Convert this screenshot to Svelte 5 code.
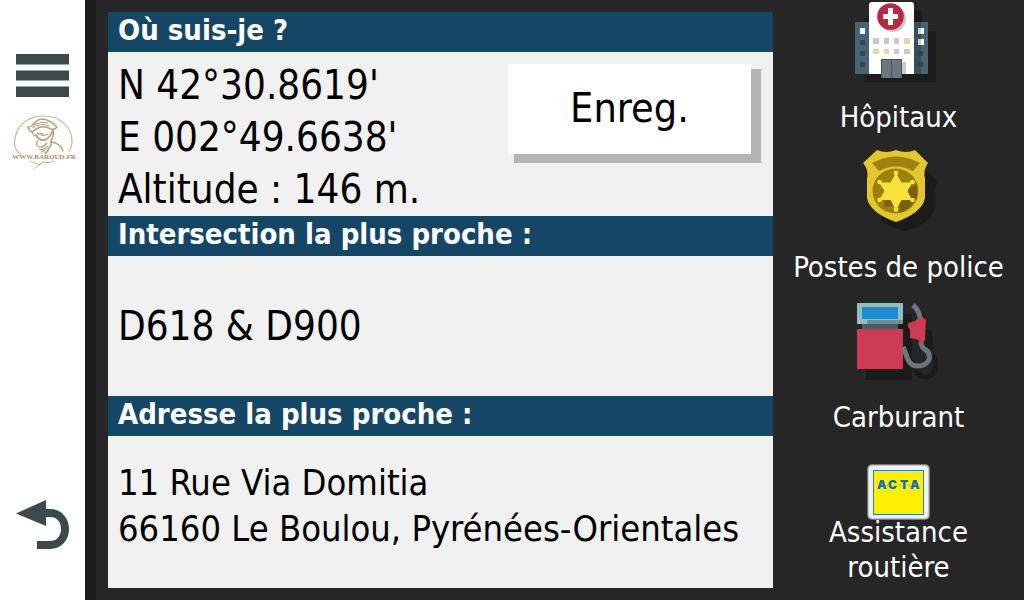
<script>
  const places = [
    { id: 'hospital', label: 'Hôpitaux' },
    { id: 'police', label: 'Postes de police' },
    { id: 'fuel', label: 'Carburant' },
    { id: 'assist', label: 'Assistance routière' }
  ];
  const position = ["N 42°30.8619'", "E 002°49.6638'", 'Altitude : 146 m.'];
  const address = ['11 Rue Via Domitia', '66160 Le Boulou, Pyrénées-Orientales'];
</script>

<div class="screen">
  <nav class="rail">
    <div class="top">
      <button class="plain" aria-label="Menu">
        <svg width="53" height="44" viewBox="0 0 53 44" shape-rendering="crispEdges">
          <path fill="#9ca4a4" d="M0 10h53v1H0zM0 16h53v1H0zM0 26h53v1H0zM0 32h53v1H0z" />
          <path fill="#3c4a4b" d="M0 0h53v10H0zM0 17h53v9H0zM0 33h53v10H0z" />
        </svg>
      </button>
      <svg class="brand" width="64" height="58" viewBox="0 0 64 58" role="img" aria-label="www.baroud.fr">
        <g fill="none" stroke="#b7a078" stroke-linecap="round" stroke-linejoin="round">
          <path stroke-width="1.200" d="M8 41C2 36 2 31 3 25C6 10 18 3 32 3C49 3 60 15 60 28Q60 34 57 38" stroke="#c9b797" />
          <path stroke-width="1.500" d="M16 14Q18 14 21 12Q25 6 31 6Q38 7 45 14Q43 17 39 16Q31 12 26 15Q22 17 20 19Q17 18 16 14Z" />
          <path stroke-width="1" d="M20 15Q29 9 37 13M22 12Q29 8 36 10M20 19Q20 22 23 23" />
          <path stroke-width="1.800" d="M24 22Q27 28 33 27Q38 25 41 17" />
          <path stroke-width="1.200" d="M25 20Q31 24 36 21M28 20L31 21" />
          <path stroke-width="1.600" d="M41 17Q42 23 39 28Q40 33 36 36Q37 38 33 40" />
          <path stroke-width="1.200" d="M26 28Q24 30 25 33Q30 36 35 30M27 36Q32 38 36 33M29 39L33 37" />
          <path stroke-width="1.400" d="M40 29Q48 30 51 38" />
          <path stroke-width="1" d="M18 48L28 52Q30 50 31 49M22 56Q27 52 31 49Q37 51 42 48" stroke="#c9b797" />
        </g>
        <text x="32" y="46" text-anchor="middle">WWW.BAROUD.FR</text>
      </svg>
    </div>
    <button class="plain" aria-label="Retour">
      <svg width="53" height="49" viewBox="0 0 53 49">
        <path fill="#3c4a4b" d="M0 13.500L30 0V26Z" />
        <path fill="none" stroke="#3c4a4b" stroke-width="8" d="M29 13H34C43 13 49 20 49 29C49 38 43 45 34 45H21" />
      </svg>
    </button>
  </nav>

  <main>
    <section class="where">
      <h1>Où suis-je ?</h1>
      <div class="body position">
        <div class="coords">
          {#each position as line}<p>{line}</p>{/each}
        </div>
        <button class="save">Enreg.</button>
      </div>
    </section>
    <section class="junction">
      <h2>Intersection la plus proche :</h2>
      <div class="body"><p class="road">D618 &amp; D900</p></div>
    </section>
    <section class="nearest">
      <h2>Adresse la plus proche :</h2>
      <div class="body">
        <address>
          {#each address as line}<p>{line}</p>{/each}
        </address>
      </div>
    </section>
  </main>

  <aside>
    {#each places as place}
      <a href={'#' + place.id}>
        <svg width="118" height="100" viewBox="0 0 118 100" aria-hidden="true">
          {#if place.id === 'hospital'}
            <path fill="#1b1b1b" d="M24 20L35 10H78Q82 10 82 14V31H96V82H24Z" />
            <path fill="#466473" d="M15 22H88V74H15Z" />
            <path fill="#34505d" d="M74 22H81V74H74Z" />
            <path fill="#fff" d="M29 5Q29 2 32 2H71Q74 2 74 5V74H29Z" />
            <path fill="#fff" d="M20 28h5v6h-5z" />
            <path fill="#cbd0d3" d="M78 28h6v6h-6zM78 39h6v6h-6z" />
            <path fill="#fff" d="M81 28h3v6h-3zM81 39h3v6h-3z" />
            <path fill="#2f4651" d="M20 40h5v5h-5zM20 51h5v5h-5zM20 62h5v5h-5zM78 51h5v5h-5zM78 62h5v5h-5z" />
            <circle cx="53" cy="19" r="13" fill="#c8c8c8" />
            <circle cx="50.500" cy="16.500" r="13.300" fill="#b82843" />
            <path fill="#fff" d="M48 8h5v6h5v5h-5v6h-5v-6h-5v-5h5z" />
            <path fill="#c9c9c9" d="M33 38h6v6h-6zM44 38h5v6h-5zM54 38h5v6h-5zM54 49h5v5h-5zM64 49h6v5h-6zM62 62h4v12h-4z" />
            <path fill="#e6d6a9" d="M64 38h6v6h-6zM33 49h6v5h-6zM44 49h5v5h-5z" />
            <path fill="#465158" d="M41 59h21v19H41z" />
            <path fill="#6a7680" d="M42 60h9v18h-9zM52 60h9v18h-9z" />
          {:else if place.id === 'police'}
            <path fill="#1b1b1b" d="M80 15L97 31Q93 40 95 54Q95 72 66 81Q54 80 40 70Z" />
            <path fill="#e3c72e" d="M37 0Q46 4 56 0Q66 4 75 0L88 13Q83 20 85 29V48Q82 63 56 72Q30 63 27 48V29Q29 20 23 13Z" />
            <path fill="#9c8110" d="M32 13Q56 0 80 13L73 21Q56 12 39 21Z" />
            <ellipse cx="55.500" cy="41" rx="23" ry="22.500" fill="#9c8110" />
            <path fill="#77630f" d="M44 51L77 34V47Q71 59 60 63L59 55L45 57Z" />
            <path fill="#fae23b" d="M56 23L61.500 32.500H72L67.500 41L72 50H61.500L56 60L50.500 50H39L44.500 41L39 32.500H50.500Z" />
            <g fill="#fae23b"><circle cx="56" cy="23" r="2.300" /><circle cx="72.500" cy="32" r="2.300" /><circle cx="72.500" cy="50" r="2.300" /><circle cx="56" cy="59.500" r="2.300" /><circle cx="39.500" cy="50" r="2.300" /><circle cx="39.500" cy="32" r="2.300" /></g>
          {:else if place.id === 'fuel'}
            <path fill="#1b1b1b" d="M26 14H72V80H26Z" />
            <path fill="none" stroke="#1b1b1b" stroke-width="5" d="M78 12Q85 17 85 28M72 60C76 84 96 80 96 65Q96 58 90 54" />
            <path fill="#1b1b1b" d="M82 26L92 32L93 50L82 48Z" />
            <path fill="#92bdc1" d="M17 3h46v21H17z" />
            <path fill="#6f9091" d="M27 20h36v4H27z" />
            <path fill="#1b8dd4" d="M22 7h36v12H22z" />
            <path fill="#4e5a61" d="M22 24h36v5H22z" />
            <path fill="#cd3a54" d="M17 29h46v40H17z" />
            <g fill="none" stroke="#6a7680" stroke-width="5"><path d="M73 5Q79 10 80.500 19" /><path d="M63 47C67 54 67 66 77 66C89 66 93 56 86 50Q81 47 81 42" /></g>
            <path fill="#cd3a54" d="M68 23L75 21L78 18H84L86 20L85 40L83 43H79V40L70 38V29L68 27Z" />
          {:else}
            <rect x="27" y="14" width="63" height="56" rx="5" fill="#777" />
            <rect x="28" y="15" width="61" height="54" rx="4" fill="#c5c5c5" />
            <rect x="29" y="16" width="59" height="52" rx="4" fill="#f2f2f2" />
            <rect x="33.500" y="20.500" width="50" height="44" fill="#ffef00" stroke="#2882c0" />
            <text class="acta" y="39"><tspan x="37">A</tspan><tspan x="48">C</tspan><tspan x="60">T</tspan><tspan x="70">A</tspan></text>
            <path fill="#d66a22" d="M47 35h1v1h-1zM59 35h1v1h-1zM69 35h1v1h-1z" />
          {/if}
        </svg>
        <span>{place.label}</span>
      </a>
    {/each}
  </aside>
</div>

<style>
  :global(body) { margin: 0; background: #262626; }
  .screen {
    display: grid;
    grid-template-columns: 96px 1fr 251px;
    min-height: 100vh;
    font-family: "DejaVu Sans Condensed", "DejaVu Sans", sans-serif;
    color: #000;
  }
  .rail {
    box-sizing: border-box;
    display: flex;
    flex-direction: column;
    justify-content: space-between;
    padding: 54px 16px 51px;
    background: #fff;
    border-right: 11px solid #1c1c1c;
  }
  .rail svg, aside svg { display: block; }
  .plain { display: block; padding: 0; border: 0; background: none; }
  .top { display: flex; flex-direction: column; gap: 15px; }
  .brand { margin-left: -4px; overflow: visible; }
  .brand text { font: bold 7px "Liberation Serif", serif; fill: #a98d5c; }
  main { display: flex; flex-direction: column; padding: 12px 0 12px 12px; }
  section { display: flex; flex-direction: column; }
  .where { flex: 0 0 auto; }
  .junction { flex: 1 0 180px; }
  .nearest { flex: 1 0 192px; }
  h1, h2 {
    margin: 0;
    padding: 0 10px;
    height: 40px;
    background: #164665;
    color: #fff;
    font-size: 29px;
    line-height: 36px;
  }
  p { margin: 0; }
  .body {
    flex: 1;
    display: flex;
    align-items: center;
    padding: 0 10px;
    background: #f1f1f1;
  }
  .position { align-items: flex-start; justify-content: space-between; padding: 7px 22px 1px 10px; }
  .coords, .road { font-size: 40px; line-height: 52px; }
  .save {
    width: 243px;
    height: 90px;
    margin-top: 5px;
    padding: 0 0 2px;
    border: 0;
    background: #fff;
    box-shadow: 8px 7px 0 2px #b4b4b4;
    color: #000;
    font: 41px "DejaVu Sans Condensed", "DejaVu Sans", sans-serif;
  }
  address { font-size: 36px; font-style: normal; line-height: 46px; padding-bottom: 12px; }
  aside { display: grid; grid-template-rows: repeat(4, 1fr); }
  a {
    display: grid;
    justify-items: center;
    padding-bottom: 15px;
    color: #fff;
    font-size: 29px;
    line-height: 35px;
    text-align: center;
    text-decoration: none;
  }
  a svg { grid-area: 1 / 1; }
  a span { grid-area: 1 / 1; align-self: end; padding: 0 12px; }
  a:last-child span { padding: 0 50px; }
  .acta { font: 900 12px Inter, sans-serif; fill: #0871bb; }
</style>
